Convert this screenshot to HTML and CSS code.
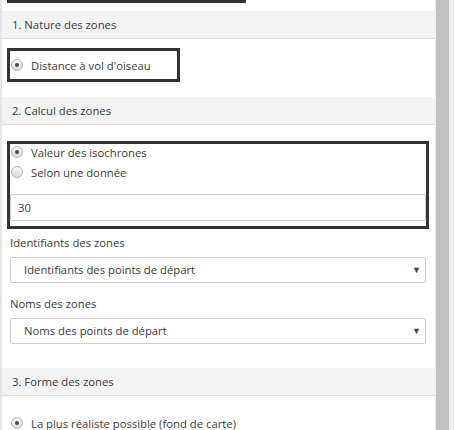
FILE: index.html
```html
<!DOCTYPE html>
<html lang="fr">
  <head>
    <meta charset="UTF-8">
    <title>Zones</title>
    <link rel="stylesheet" href="styles.css">
  </head>
  <body>
    <div class="frame">
      <div class="panel">
        <div class="prev-box"></div>

        <div class="section-title">1. Nature des zones</div>
        <div class="outline outline-small">
          <label class="radio-row"><span class="radio checked"></span>Distance à vol d'oiseau</label>
        </div>

        <div class="section-title">2. Calcul des zones</div>
        <div class="outline outline-wide">
          <div class="radio-list">
            <label class="radio-row"><span class="radio checked"></span>Valeur des isochrones</label>
            <label class="radio-row"><span class="radio"></span>Selon une donnée</label>
          </div>
          <div class="text-input">30</div>
        </div>

        <div class="field first">
          <div class="field-label">Identifiants des zones</div>
          <div class="select">Identifiants des points de départ<span class="caret">▼</span></div>
        </div>
        <div class="field">
          <div class="field-label">Noms des zones</div>
          <div class="select">Noms des points de départ<span class="caret">▼</span></div>
        </div>

        <div class="section-title last">3. Forme des zones</div>
        <label class="radio-row loose"><span class="radio checked"></span>La plus réaliste possible (fond de carte)</label>
      </div>
      <div class="scrollbar"><div class="thumb"></div></div>
    </div>
  </body>
</html>
```

FILE: styles.css
```css
/* Page */
body {
    margin: 0;
    overflow: hidden;
    background: #fff;
    font-family: 'Open Sans', 'Lato', sans-serif;
    font-size: 11.3px;
    color: #3a3a3a;
}

.frame {
    display: flex;
    height: 430px;
}

/* Left content panel */
.panel {
    width: 433px;
    border-left: 2px solid #e6e6e6;
    background: #fff;
}

/* bottom edge of the box scrolled above */
.prev-box {
    width: 233px;
    height: 0;
    margin-left: 5px;
    border: 3px solid #333;
    border-top: none;
}

/* Section headers */
.section-title {
    height: 27px;
    line-height: 27px;
    padding-left: 10px;
    margin-top: 8px;
    background: #f3f3f3;
    border-bottom: 1px solid #dedede;
}

.section-title.last {
    margin-top: 24px;
}

/* Highlighted groups */
.outline {
    border: 3px solid #333;
    margin-left: 5px;
}

.outline-small {
    width: 167px;
    height: 28px;
    margin-top: 9px;
    margin-bottom: 15px;
    display: flex;
    align-items: center;
}

.outline-wide {
    width: 416px;
    margin-top: 16px;
    padding-bottom: 5px;
}

.radio-list {
    margin-top: -2px;
}

/* Radio buttons */
.radio-row {
    display: flex;
    align-items: center;
    height: 20px;
    padding-left: 1px;
}

.radio-row.loose {
    margin-top: 17px;
    padding-left: 9px;
}

.radio {
    width: 10px;
    height: 10px;
    margin-right: 8px;
    border: 1px solid #b5b5b5;
    border-radius: 50%;
    background: linear-gradient(#f6f6f6, #dcdcdc);
    display: flex;
    align-items: center;
    justify-content: center;
    flex-shrink: 0;
}

.radio.checked::after {
    content: "";
    width: 4px;
    height: 4px;
    border-radius: 50%;
    background: #4a4a4a;
}

/* Inputs */
.text-input {
    height: 25px;
    line-height: 25px;
    margin-top: 12px;
    padding-left: 7px;
    border: 1px solid #cfcfcf;
    border-radius: 2px;
}

.field {
    margin: 11px 9px 0 8px;
}

.field.first {
    margin-top: 4px;
}

.field-label {
    height: 20px;
    line-height: 20px;
    margin-bottom: 4px;
}

.select {
    position: relative;
    height: 24px;
    line-height: 24px;
    padding-left: 13px;
    border: 1px solid #cfcfcf;
    border-radius: 2px;
}

.caret {
    position: absolute;
    right: 4px;
    top: 0;
    font-size: 9px;
    color: #444;
}

/* Scrollbar */
.scrollbar {
    width: 19px;
    background: #efefef;
    display: flex;
}

.thumb {
    width: 13px;
    margin-left: 1px;
    background: #c1c1c1;
}
```
